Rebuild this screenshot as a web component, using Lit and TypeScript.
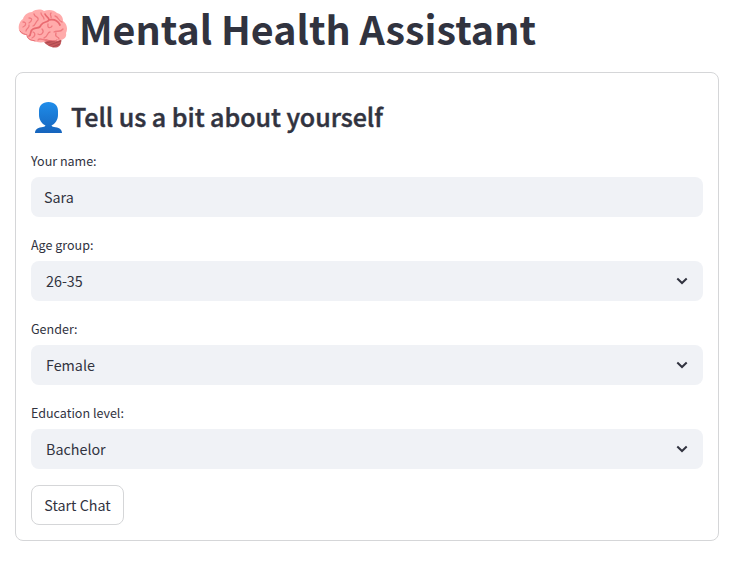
import { LitElement, html, css } from "lit";
import { customElement, property } from "lit/decorators.js";

@customElement("brain-icon")
class BrainIcon extends LitElement {
  static styles = css`
    :host { display: block; width: 50px; height: 40px; }
    svg { display: block; }
  `;
  render() {
    return html`<svg width="50" height="40" viewBox="0 0 50 40" fill="none" stroke-linecap="round" stroke-linejoin="round">
      <path d="M25 31C27 36 34 39 38 38.500C42 38 44 34 43 30Z" fill="#c6595c"/>
      <path d="M28 34L40 31M31 36.200L43 32M35 37.800L42 35" stroke="#a3434a" stroke-width=".8"/>
      <path d="M1 21C0 16 2 12 5 10C6 6 10 3 14 3C18 0 23 0 26 2C31 0 36 1 39 4C43 5 45 8 45 12C49 15 50 20 48 24C49 28 46 31 42 31C39 33 35 32 31 31C27 34 20 34 16 32C12 32 9 30 9 26C5 26 2 24 1 21Z" fill="#ffabab"/>
      <path d="M11 27C14 26 11 22 15 20C19 18 22 20 23 16C26 12 29 14 31 11C36 10 40 12 42 16M31 11C31 8 28 8 27 5" stroke="#e96a70" stroke-width="1.7"/>
      <path d="M5 13C9 13 8 17 5 18M11 9C15 9 14 12 11 14M16 5C17 9 21 7 20 11C17 13 18 16 15 17M23 4C23 7 26 7 26 10M33 4C31 6 34 7 33 9M37 7C41 8 40 12 44 13M30 15C29 20 33 19 34 17M24 20C27 23 23 27 20 25M15 23C18 24 17 28 14 29M32 23C29 23 30 28 26 29M36 23C39 21 42 24 45 20M38 24C36 29 41 27 41 30M20 31C22 28 25 32 29 31M8 22C8 19 12 19 11 16" stroke="#f07b80" stroke-width="1.3"/>
      <path d="M9 27C10 31 14 31 17 32M27 31C31 31 35 33 39 31M2 22C4 25 7 25 9 26" stroke="#e66b72" stroke-width="1"/>
    </svg>`;
  }
}

@customElement("user-icon")
class UserIcon extends LitElement {
  static styles = css`
    :host { display: block; width: 27px; height: 31px; }
    svg { display: block; }
  `;
  render() {
    return html`<svg width="27" height="31" viewBox="0 0 27 31">
      <defs><linearGradient id="g" x1="0" y1="0" x2="0" y2="31" gradientUnits="userSpaceOnUse">
        <stop offset="0" stop-color="#1f8dea"/><stop offset="1" stop-color="#1664bd"/></linearGradient></defs>
      <path fill="url(#g)" d="M13.500 0C19.500 0 23 3.500 23 9V13C23 18 20 22 16.500 23.500C17 25 18.500 25 20.500 25.300C25 26 27 28 27 31H0C0 28 2 26 6.500 25.300C8.500 25 10 25 10.500 23.500C7 22 4 18 4 13V9C4 3.500 7.500 0 13.500 0Z"/>
    </svg>`;
  }
}

@customElement("form-field")
class FormField extends LitElement {
  @property() label = "";
  @property() value = "";
  @property({ type: Boolean }) select = false;
  static styles = css`
    :host { display: block; height: 84px; }
    .label { height: 20px; margin-bottom: 6px; font-size: 12.53px; line-height: 20px; }
    .box {
      display: flex; align-items: center; justify-content: space-between; box-sizing: border-box;
      height: 40px; border-radius: 8px; background: #f0f2f6; padding: 0 13px;
      font-size: 14.32px; line-height: 24px;
    }
    .box.select { padding: 0 15px; }
    svg { display: block; }
  `;
  render() {
    return html`
      <div class="label">${this.label}</div>
      <div class="box ${this.select ? "select" : ""}">
        <span>${this.value}</span>
        ${this.select
          ? html`<svg width="12" height="8" viewBox="0 0 12 8" fill="none"><path d="M1.300 1.500L6 6L10.700 1.500" stroke="#31333f" stroke-width="2"/></svg>`
          : null}
      </div>`;
  }
}

@customElement("app-root")
class AppRoot extends LitElement {
  static styles = css`
    :host {
      display: block; box-sizing: border-box; height: 566px; padding: 0 25px 0 15px; overflow: hidden;
      background: #fff; color: #31333f;
      font-family: "Noto Sans CJK SC", "Noto Sans", sans-serif;
    }
    .title { display: flex; height: 72px; margin: 0; font-size: 39.4px; line-height: 56px; font-weight: 700; }
    .title brain-icon { margin: 9px 11px 0 3px; }
    .card { box-sizing: border-box; height: 469px; border: 1px solid #d5d6d8; border-radius: 8px; padding: 28px 15px 0; }
    .heading {
      display: flex; height: 50px; margin: 0; font-size: 25.07px; line-height: 30px; font-weight: 500;
      letter-spacing: -0.06px; -webkit-text-stroke: 0.45px #31333f;
    }
    .heading user-icon { margin: 1px 9px 0 4px; }
    .start {
      display: block; box-sizing: border-box; height: 40px; width: 93px; margin-top: -2px; padding: 0;
      border: 1px solid #d5d6d8; border-radius: 8px; background: #fff; color: inherit;
      font-family: inherit; font-size: 14.32px; line-height: 24px;
    }
  `;
  render() {
    return html`
      <h1 class="title"><brain-icon></brain-icon><span>Mental Health Assistant</span></h1>
      <section class="card">
        <h2 class="heading"><user-icon></user-icon><span>Tell us a bit about yourself</span></h2>
        <form-field label="Your name:" value="Sara"></form-field>
        <form-field label="Age group:" value="26-35" select></form-field>
        <form-field label="Gender:" value="Female" select></form-field>
        <form-field label="Education level:" value="Bachelor" select></form-field>
        <button class="start">Start Chat</button>
      </section>`;
  }
}
